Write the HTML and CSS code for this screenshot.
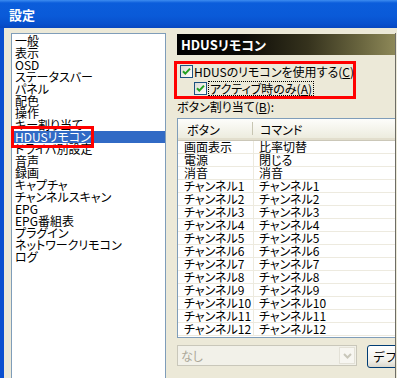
FILE: index.html
```html
<!DOCTYPE html>
<html lang="ja">
<head>
  <meta charset="UTF-8">
  <title>設定</title>
  <link rel="stylesheet" href="styles.css">
</head>
<body>

  <div class="window">
    <div class="titlebar">設定</div>

    <div class="main">
      <!-- Category list -->
      <ul class="nav">
        <li>一般</li>
        <li>表示</li>
        <li>OSD</li>
        <li>ステータスバー</li>
        <li>パネル</li>
        <li>配色</li>
        <li>操作</li>
        <li>キー割り当て</li>
        <li class="selected"><span class="mark">HDUSリモコン</span></li>
        <li>ドライバ別設定</li>
        <li>音声</li>
        <li>録画</li>
        <li>キャプチャ</li>
        <li>チャンネルスキャン</li>
        <li>EPG</li>
        <li>EPG番組表</li>
        <li>プラグイン</li>
        <li>ネットワークリモコン</li>
        <li>ログ</li>
      </ul>

      <!-- Page -->
      <div class="panel">
        <div class="panel-title">HDUSリモコン</div>

        <div class="highlight">
          <label class="check">
            <span class="box"><svg width="11" height="11" viewBox="0 0 11 11"><path d="M2 5.2 L4.3 7.6 L9 2.6" fill="none" stroke="#21a121" stroke-width="2"/></svg></span>
            <span>HDUSのリモコンを使用する(<u>C</u>)</span>
          </label>
          <label class="check sub">
            <span class="box"><svg width="11" height="11" viewBox="0 0 11 11"><path d="M2 5.2 L4.3 7.6 L9 2.6" fill="none" stroke="#21a121" stroke-width="2"/></svg></span>
            <span class="focus">アクティブ時のみ(<u>A</u>)</span>
          </label>
        </div>

        <div class="caption">ボタン割り当て(<u>B</u>):</div>

        <div class="listview">
          <div class="lv-head">
            <span class="c1">ボタン</span>
            <span class="c2">コマンド</span>
          </div>
          <div class="lv-row"><span class="c1">画面表示</span><span class="c2">比率切替</span></div>
          <div class="lv-row"><span class="c1">電源</span><span class="c2">閉じる</span></div>
          <div class="lv-row"><span class="c1">消音</span><span class="c2">消音</span></div>
          <div class="lv-row"><span class="c1">チャンネル1</span><span class="c2">チャンネル1</span></div>
          <div class="lv-row"><span class="c1">チャンネル2</span><span class="c2">チャンネル2</span></div>
          <div class="lv-row"><span class="c1">チャンネル3</span><span class="c2">チャンネル3</span></div>
          <div class="lv-row"><span class="c1">チャンネル4</span><span class="c2">チャンネル4</span></div>
          <div class="lv-row"><span class="c1">チャンネル5</span><span class="c2">チャンネル5</span></div>
          <div class="lv-row"><span class="c1">チャンネル6</span><span class="c2">チャンネル6</span></div>
          <div class="lv-row"><span class="c1">チャンネル7</span><span class="c2">チャンネル7</span></div>
          <div class="lv-row"><span class="c1">チャンネル8</span><span class="c2">チャンネル8</span></div>
          <div class="lv-row"><span class="c1">チャンネル9</span><span class="c2">チャンネル9</span></div>
          <div class="lv-row"><span class="c1">チャンネル10</span><span class="c2">チャンネル10</span></div>
          <div class="lv-row"><span class="c1">チャンネル11</span><span class="c2">チャンネル11</span></div>
          <div class="lv-row"><span class="c1">チャンネル12</span><span class="c2">チャンネル12</span></div>
        </div>

        <div class="controls">
          <div class="combo">
            <span>なし</span>
            <span class="drop"><svg width="9" height="6" viewBox="0 0 9 6"><path d="M1 1 L4.5 4.5 L8 1" fill="none" stroke="#c9c7ba" stroke-width="2"/></svg></span>
          </div>
          <button type="button">デフォルト</button>
        </div>
      </div>
    </div>
  </div>

</body>
</html>
```

FILE: styles.css
```css
body {
  margin: 0;
  width: 397px;
  height: 378px;
  overflow: hidden;
  background: #ece9d8;
  font-family: "Noto Sans CJK JP", "Liberation Sans", sans-serif;
  font-size: 12px;
  font-feature-settings: "palt";
  color: #000;
}

.window {
  height: 378px;
  display: flex;
  flex-direction: column;
}

.titlebar {
  height: 28px;
  line-height: 29px;
  padding-left: 9px;
  color: #fff;
  font-size: 13px;
  font-weight: bold;
  background: linear-gradient(#3d8cf0 0, #0b5ddb 3px, #0a5ad8 16px, #0850cd 24px, #0747c0 28px);
}

.main {
  flex: 1;
  display: flex;
  gap: 11px;
  padding: 5px 0 0 7px;
  border-left: 4px solid #0b50d0;
}

/* category list */
.nav {
  list-style: none;
  margin: 0;
  padding: 1px 0 0;
  width: 153px;
  flex: none;
  background: #fff;
  border: 1px solid #7f9db9;
  border-bottom: none;
}

.nav li {
  height: 12px;
  line-height: 12px;
  padding-left: 3px;
  white-space: nowrap;
}

.nav li.selected {
  background: #316ac5;
  color: #fff;
}

.mark {
  position: relative;
}

.mark::before {
  content: "";
  position: absolute;
  top: -2px;
  bottom: -3px;
  left: -4px;
  right: -3px;
  border: 3px solid #f00;
}

/* right page */
.panel {
  width: 218px;
  flex: none;
  padding-top: 1px;
  border-right: 1px solid #6e6d66;
}

.panel-title {
  height: 21px;
  line-height: 21px;
  padding-left: 4px;
  color: #fff;
  font-size: 13px;
  font-weight: bold;
  background: linear-gradient(to right, #000 0%, #0c0b06 30%, #35321d 60%, #6b6740 85%, #8d8858 100%);
}

.highlight {
  margin: 6px 0 0 -3px;
  width: 173px;
  padding: 1px 0 1px 3px;
  border: 3px solid #f00;
  display: flex;
  flex-direction: column;
  gap: 4px;
}

.check {
  display: flex;
  align-items: center;
  gap: 1px;
  height: 13px;
  white-space: nowrap;
}

.check.sub {
  padding-left: 14px;
  gap: 2px;
}

.box {
  width: 11px;
  height: 11px;
  border: 1px solid #1c5180;
  background: linear-gradient(135deg, #dcdbd5, #fff);
  display: flex;
}

.focus {
  outline: 1px dotted #000;
  padding: 0 1px;
  line-height: 13px;
}

.caption {
  margin-top: 1px;
  height: 13px;
  line-height: 13px;
}

/* list view */
.listview {
  margin-top: 5px;
  padding-bottom: 1px;
  background: #fff;
  border: 1px solid #7f9db9;
  border-right: none;
}

.lv-head {
  display: flex;
  height: 22px;
  line-height: 21px;
  box-sizing: border-box;
  background: linear-gradient(#fdfdfb, #ebeadb);
  border-bottom: 1px solid #cbc7b8;
  box-shadow: inset 0 -2px #e2decd;
}

.lv-head .c1 {
  width: 75px;
  padding-left: 9px;
  box-sizing: border-box;
  border-right: 1px solid #c7c5b2;
  margin: 3px 0 5px;
  line-height: 15px;
}

.lv-head .c2 {
  padding-left: 7px;
  margin-top: 3px;
  line-height: 15px;
}

.lv-row {
  display: flex;
  height: 13px;
  line-height: 12px;
  box-sizing: border-box;
  border-bottom: 1px solid #edeadf;
  white-space: nowrap;
}

.lv-row .c1 {
  width: 76px;
  padding-left: 6px;
  box-sizing: border-box;
  border-right: 1px solid #edeadf;
}

.lv-row .c2 {
  padding-left: 5px;
}

/* bottom controls */
.controls {
  display: flex;
  align-items: flex-start;
  gap: 10px;
  margin-top: 7px;
  overflow: hidden;
}

.combo {
  width: 180px;
  height: 21px;
  flex: none;
  box-sizing: border-box;
  border: 1px solid #c9c7ba;
  background: #f2f1e9;
  color: #aca899;
  display: flex;
  align-items: center;
  justify-content: space-between;
  padding-left: 3px;
}

.drop {
  width: 16px;
  height: 17px;
  margin-right: 1px;
  background: #f7f6f1;
  border: 1px solid #e3e1d7;
  box-sizing: border-box;
  display: flex;
  align-items: center;
  justify-content: center;
}

button {
  width: 75px;
  height: 23px;
  flex: none;
  padding: 0 0 0 5px;
  text-align: left;
  font-family: inherit;
  font-size: 12px;
  color: #000;
  border: 1px solid #003c74;
  border-radius: 3px;
  background: linear-gradient(#fff, #f0efe9 70%, #dcd8cc);
}
```
